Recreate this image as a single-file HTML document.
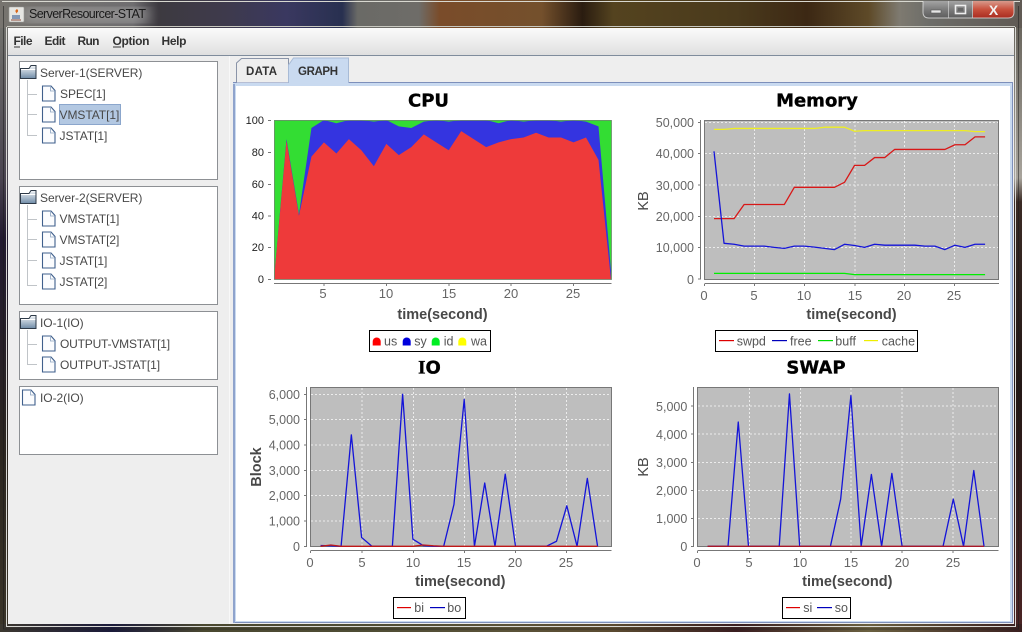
<!DOCTYPE html>
<html><head><meta charset="utf-8"><title>ServerResourcer-STAT</title>
<style>
html,body{margin:0;padding:0;background:#000;overflow:hidden}
svg{display:block}
text{font-family:"Liberation Sans",sans-serif}
.tree{font-size:12px;fill:#484848;letter-spacing:-.05px}
.menu{font-size:12px;font-weight:bold;fill:#333}
.tab{font-size:11.5px;font-weight:bold;fill:#333}
.title{font-family:"DejaVu Sans",sans-serif;font-size:18px;font-weight:bold;fill:#000;stroke:#000;stroke-width:.35;text-anchor:middle}
.axis{font-size:14.5px;font-weight:bold;fill:#484848;text-anchor:middle}
.tick{font-size:12.5px;fill:#666;text-anchor:end}
.xt{font-size:13px;fill:#666;text-anchor:middle}
.cput{font-size:11px;fill:#222;text-anchor:end}
.leg{font-size:12.5px;fill:#555}
.l{fill:none;stroke-width:1.3;vector-effect:non-scaling-stroke;stroke-linejoin:round}
.grid{stroke:#fff;stroke-opacity:.7;stroke-width:1;stroke-dasharray:2 2;fill:none}
.ax{stroke:#777;stroke-width:1;fill:none}
</style></head><body>
<svg width="1022" height="632" viewBox="0 0 1022 632" xmlns="http://www.w3.org/2000/svg">
<defs>
<linearGradient id="tb" x1="0" x2="1" y1="0" y2="0">
<stop offset="0" stop-color="#77746f"/><stop offset=".13" stop-color="#6f6e70"/><stop offset=".155" stop-color="#3d3a40"/><stop offset=".22" stop-color="#3e3a4c"/><stop offset=".28" stop-color="#3a3860"/><stop offset=".335" stop-color="#283050"/><stop offset=".35" stop-color="#6a6a66"/><stop offset=".41" stop-color="#6e6c68"/><stop offset=".43" stop-color="#7a4c2a"/><stop offset=".53" stop-color="#74502c"/><stop offset=".57" stop-color="#2a1c10"/><stop offset=".6" stop-color="#54431f"/><stop offset=".72" stop-color="#4a3a1c"/><stop offset=".79" stop-color="#3c2814"/><stop offset=".85" stop-color="#5e4a28"/><stop offset=".88" stop-color="#7e7a70"/><stop offset=".91" stop-color="#6c6c68"/><stop offset="1" stop-color="#605a54"/>
</linearGradient>
<linearGradient id="bb" x1="0" x2="1" y1="0" y2="0">
<stop offset="0" stop-color="#3c3830"/><stop offset=".11" stop-color="#1a1a3a"/><stop offset=".2" stop-color="#4a4830"/><stop offset=".35" stop-color="#4e4c34"/><stop offset=".5" stop-color="#5a5238"/><stop offset=".6" stop-color="#5a4a30"/><stop offset=".72" stop-color="#3a1e20"/><stop offset=".85" stop-color="#6a6040"/><stop offset="1" stop-color="#3a2020"/>
</linearGradient>
<linearGradient id="lb" x1="0" x2="0" y1="0" y2="1">
<stop offset="0" stop-color="#70706c"/><stop offset=".25" stop-color="#4a4450"/><stop offset=".35" stop-color="#221a30"/><stop offset=".7" stop-color="#2c2620"/><stop offset="1" stop-color="#3a3428"/>
</linearGradient>
<linearGradient id="rb" x1="0" x2="0" y1="0" y2="1">
<stop offset="0" stop-color="#6a665e"/><stop offset=".25" stop-color="#a8a49c"/><stop offset=".29" stop-color="#3a2a24"/><stop offset=".6" stop-color="#241816"/><stop offset="1" stop-color="#4a2424"/>
</linearGradient>
<linearGradient id="mn" x1="0" x2="0" y1="0" y2="1"><stop offset="0" stop-color="#fbfbfb"/><stop offset="1" stop-color="#dfdfdf"/></linearGradient>
<linearGradient id="btn" x1="0" x2="0" y1="0" y2="1"><stop offset="0" stop-color="#a4a4a4"/><stop offset=".5" stop-color="#7c7c7c"/><stop offset="1" stop-color="#5c5c5c"/></linearGradient>
<linearGradient id="cl" x1="0" x2="0" y1="0" y2="1"><stop offset="0" stop-color="#d89a8c"/><stop offset=".5" stop-color="#c8503c"/><stop offset="1" stop-color="#a82c20"/></linearGradient>
<linearGradient id="fd" x1="0" x2="0" y1="0" y2="1"><stop offset="0" stop-color="#f4f6f8"/><stop offset="1" stop-color="#6f8ca8"/></linearGradient>
<filter id="blur"><feGaussianBlur stdDeviation="6"/></filter>
<symbol id="doc" width="15" height="17" viewBox="0 0 15 17"><path d="M1 .5H9.500L13.500 5V15.500H1Z" fill="#fbfcfe" stroke="#3f5f8c" stroke-width="1.100"/><path d="M9 .5V5.500H13.500" fill="none" stroke="#8ea4c0" stroke-width=".8"/></symbol>
<symbol id="fold" width="17" height="14" viewBox="0 0 17 14"><path d="M.5 3.500H9L11 .5H16V13.500H.5Z" fill="url(#fd)" stroke="#2e3a48"/><path d="M1 4.500H15.500" stroke="#fff" stroke-width="1"/></symbol>
</defs>

<!-- window chrome -->
<rect width="1022" height="632" fill="#333"/>
<rect x="0" y="0" width="1022" height="28" fill="url(#tb)"/>
<rect x="0" y="28" width="8" height="600" fill="url(#lb)"/>
<rect x="1014" y="28" width="8" height="600" fill="url(#rb)"/>
<rect x="0" y="624" width="1022" height="8" fill="url(#bb)"/>
<rect x="24" y="8" width="124" height="14" fill="#b8b8b8" opacity=".55" filter="url(#blur)"/>
<path d="M2 1.500H1020" stroke="#d8d8d0" stroke-width="1"/>
<path d="M7 26.500H1015" stroke="#c8c8c0" stroke-width="1"/>
<path d="M6.500 27V626.500H1015.500V27" fill="none" stroke="#d8d8d4" stroke-width="1"/>
<path d="M3.500 6V629H1018.500V6" fill="none" stroke="#1a1a1a" stroke-opacity=".5" stroke-width="1"/>
<!-- title icon -->
<rect x="9" y="7" width="15" height="15" rx="1" fill="#e6e6e2" stroke="#9a9a96" stroke-width=".6"/>
<path d="M17 9c-3 2-1 3 0 5-1-2 3-2 0-5Z" fill="#d9661a"/>
<path d="M12 16h8M12 18h8" stroke="#4a6a9a" stroke-width="1.200"/>
<path d="M11 20h10" stroke="#8a4a3a" stroke-width="1"/>
<text x="29" y="18" font-size="12.500" fill="#1a1a1a" textLength="117" lengthAdjust="spacing">ServerResourcer-STAT</text>
<!-- window buttons -->
<path d="M923 1H948V18H929Q923 18 923 12Z" fill="url(#btn)"/>
<rect x="948" y="1" width="25" height="17" fill="url(#btn)"/>
<path d="M973 1H1014V12Q1014 18 1008 18H973Z" fill="url(#cl)"/>
<path d="M923 1V12Q923 18 929 18H1008Q1014 18 1014 12V1" fill="none" stroke="#e8e8e8" stroke-opacity=".75"/>
<path d="M948.500 1V18M972.500 1V18" stroke="#ddd" stroke-opacity=".6"/>
<rect x="931" y="10" width="10" height="3" fill="#e6e6e6" stroke="#555" stroke-width=".6"/>
<rect x="955.500" y="5.500" width="10" height="8" fill="none" stroke="#eee" stroke-width="1.600"/>
<rect x="958" y="8" width="5" height="3" fill="#666"/>
<text x="993.500" y="15" font-size="14" font-weight="bold" fill="#f2f2f2" text-anchor="middle">X</text>

<!-- client -->
<rect x="8" y="28" width="1006" height="596" fill="#eeeeee"/>
<rect x="8" y="28" width="1006" height="27" fill="url(#mn)"/>
<path d="M8 55.500H1014" stroke="#7f8c9c"/>
<text class="menu" x="13.500" y="45" textLength="19">File</text><path d="M14 47H20" stroke="#333"/>
<text class="menu" x="44.500" y="45" textLength="21">Edit</text>
<text class="menu" x="77.500" y="45" textLength="22">Run</text>
<text class="menu" x="112.500" y="45" textLength="37">Option</text><path d="M113 47H121" stroke="#333"/>
<text class="menu" x="161.500" y="45" textLength="25">Help</text>

<!-- tree boxes -->
<g fill="#fff" stroke="#8d9094">
<rect x="19.500" y="61.500" width="198" height="118"/>
<rect x="19.500" y="186.500" width="198" height="118"/>
<rect x="19.500" y="311.500" width="198" height="68"/>
<rect x="19.500" y="386.500" width="198" height="68"/>
</g>
<g fill="none" stroke="#c0c4c8">
<path d="M27.500 80V135.500H37M28 94.500H37M28 114.500H37"/>
<path d="M27.500 205V285.500H37M28 219.500H37M28 239.500H37M28 260.500H37"/>
<path d="M27.500 330V364.500H37M28 344.500H37"/>
</g>
<rect x="59.500" y="104.500" width="61" height="20" fill="#b3c8e2" stroke="#8ba6cc"/>
<use href="#fold" x="20" y="65"/><use href="#fold" x="20" y="190"/><use href="#fold" x="20" y="315"/>
<use href="#doc" x="41.500" y="85.500"/><use href="#doc" x="41.500" y="106.500"/><use href="#doc" x="41.500" y="127.500"/>
<use href="#doc" x="41.500" y="210.500"/><use href="#doc" x="41.500" y="231.500"/><use href="#doc" x="41.500" y="252.500"/><use href="#doc" x="41.500" y="273.500"/>
<use href="#doc" x="41.500" y="335.500"/><use href="#doc" x="41.500" y="356.500"/><use href="#doc" x="21.500" y="389.500"/>
<g class="tree">
<text x="40" y="77">Server-1(SERVER)</text>
<text x="60" y="98">SPEC[1]</text><text x="59.500" y="119">VMSTAT[1]</text><text x="59.500" y="140">JSTAT[1]</text>
<text x="40" y="202">Server-2(SERVER)</text>
<text x="59.500" y="223">VMSTAT[1]</text><text x="59.500" y="244">VMSTAT[2]</text><text x="59.500" y="265">JSTAT[1]</text><text x="59.500" y="286">JSTAT[2]</text>
<text x="40" y="327">IO-1(IO)</text>
<text x="60" y="348" textLength="110">OUTPUT-VMSTAT[1]</text><text x="60" y="369" textLength="100">OUTPUT-JSTAT[1]</text>
<text x="40" y="402">IO-2(IO)</text>
</g>

<!-- splitter edge -->
<rect x="229" y="56" width="1" height="568" fill="#f8f8f8"/>

<!-- content panel -->
<rect x="233" y="82" width="780" height="541" fill="#7d8fba"/>
<rect x="233" y="83" width="779" height="539" fill="#c9daf0"/>
<rect x="233" y="84" width="2" height="539" fill="#8fa3cc"/>
<rect x="236" y="86" width="774" height="535" fill="#fff"/>

<!-- tabs -->
<path d="M236.500 82.500V63L241.500 58.500H288.500V82.500" fill="#eeeeee" stroke="#8a94a8"/>
<path d="M288.500 84V65L293.500 58H348.500V84Z" fill="#c9daf0"/>
<path d="M288.500 82V65L293.500 58H348.500V82" fill="none" stroke="#a8bbd6"/>
<text class="tab" x="246" y="75" textLength="31">DATA</text>
<text class="tab" x="298" y="75" textLength="40">GRAPH</text>

<!-- CPU -->
<text class="title" x="428.500" y="106.500">CPU</text>
<rect x="274" y="120" width="337.500" height="159.500" fill="#33dd33"/>
<g transform="translate(261.520,279.500) scale(12.480,-1.595)">
<polygon fill="#3434e0" points="1,0 2,88 3,41 4,95 5,100 6,98 7,100 8,100 9,99 10,100 11,96 12,95 13,99 14,100 15,99 16,100 17,100 18,100 19,98 20,100 21,99 22,100 23,100 24,99 25,100 26,99 27,96 28,6 28,0"/>
<polygon fill="#ee3a3a" points="1,0 2,87 3,40 4,77 5,86 6,79 7,88 8,81 9,71 10,85 11,78 12,83 13,91 14,86 15,81 16,93 17,88 18,83 19,86 20,88 21,89 22,92 23,89 24,89 25,86 26,89 27,75 28,0"/>
</g>
<rect x="274.500" y="120.500" width="337" height="159" fill="none" stroke="#6e8a6e" stroke-width=".8"/>
<path class="ax" d="M274 283.500H611.500M324 284V286M386.500 284V286M449 284V286M511 284V286M573.500 284V286M268 120.500H271M268 152.500H271M268 184.500H271M268 216H271M268 247.500H271M268 279.500H271"/>
<g class="cput"><text x="264" y="124">100</text><text x="264" y="156">80</text><text x="264" y="188">60</text><text x="264" y="219.500">40</text><text x="264" y="251">20</text><text x="264" y="283">0</text></g>
<g class="xt"><text x="323" y="298">5</text><text x="386" y="298">10</text><text x="449" y="298">15</text><text x="511" y="298">20</text><text x="573" y="298">25</text></g>
<text class="axis" x="442.500" y="319">time(second)</text>
<rect x="369.500" y="330.500" width="121" height="21" fill="#fff" stroke="#000"/>
<path d="M372.700 345.500V341.500A4 4 0 0 1 380.700 341.500V345.500Z" fill="#f00"/>
<path d="M402.700 345.500V341.500A4 4 0 0 1 410.700 341.500V345.500Z" fill="#00d"/>
<path d="M431.700 345.500V341.500A4 4 0 0 1 439.700 341.500V345.500Z" fill="#0e2"/>
<path d="M458.300 345.500V341.500A4 4 0 0 1 466.300 341.500V345.500Z" fill="#ff0"/>
<g class="leg"><text x="384" y="345.500">us</text><text x="414.300" y="345.500">sy</text><text x="443.700" y="345.500">id</text><text x="471" y="345.500">wa</text></g>

<!-- Memory -->
<text class="title" x="817" y="106.500">Memory</text>
<rect x="704.500" y="120.500" width="294" height="159" fill="#bebebe" stroke="#777"/>
<path class="grid" d="M754.500 121V279M804.500 121V279M855 121V279M904.500 121V279M954.500 121V279M705 122.500H998M705 153.500H998M705 185H998M705 216.500H998M705 247.500H998"/>
<g transform="translate(703.960,278.700) scale(10.040,-0.00313)">
<polyline class="l" stroke="#00ee00" points="1,1700 14,1700 15,1300 28,1300"/>
<polyline class="l" stroke="#eeee22" points="1,47700 2,47700 3,48000 11,48000 12,48400 14,48400 15,47100 16,47300 26,47300 27,47000 28,47000"/>
<polyline class="l" stroke="#d81818" points="1,19200 3,19200 4,23700 8,23700 9,29200 13,29200 14,30800 15,36200 16,36200 17,38700 18,38700 19,41300 24,41300 25,42800 26,42800 27,45300 28,45300"/>
<polyline class="l" stroke="#1414d8" points="1,40700 2,11300 3,11000 4,10400 5,10400 6,10400 7,10000 8,9700 9,10400 10,10400 11,10100 12,9700 13,9300 14,11000 15,10600 16,10000 17,11000 18,10700 19,10700 20,10700 21,10700 22,10400 23,10400 24,9300 25,10700 26,10000 27,11000 28,11000"/>
</g>
<path class="ax" d="M700.500 120V279M698 122.500H701M698 153.500H701M698 185H701M698 216.500H701M698 247.500H701M698 279H701M704.500 283.500H999M704.500 284V286M754.500 284V286M804.500 284V286M855 284V286M904.500 284V286M954.500 284V286"/>
<g class="tick"><text x="694" y="127">50,000</text><text x="694" y="158">40,000</text><text x="694" y="190">30,000</text><text x="694" y="221">20,000</text><text x="694" y="252">10,000</text><text x="694" y="284">0</text></g>
<g class="xt"><text x="704" y="300">0</text><text x="754" y="300">5</text><text x="804" y="300">10</text><text x="855" y="300">15</text><text x="904" y="300">20</text><text x="954" y="300">25</text></g>
<text class="axis" x="851.500" y="319">time(second)</text>
<text class="axis" style="font-weight:normal" transform="translate(648,201) rotate(-90)">KB</text>
<rect x="715.500" y="330.500" width="202" height="21" fill="#fff" stroke="#000"/>
<rect x="719" y="340" width="15" height="1.200" fill="#d00"/><rect x="772" y="340" width="15" height="1.200" fill="#00b"/><rect x="818" y="340" width="15" height="1.200" fill="#0d0"/><rect x="864" y="340" width="14" height="1.200" fill="#ee0"/>
<g class="leg"><text x="736.700" y="345.500">swpd</text><text x="790" y="345.500">free</text><text x="835.300" y="345.500">buff</text><text x="881.700" y="345.500">cache</text></g>

<!-- IO -->
<text class="title" x="429.500" y="373.500"><tspan style="font-family:'Liberation Serif',serif;font-size:19px">I</tspan>O</text>
<rect x="310.500" y="387.500" width="301" height="159" fill="#bebebe" stroke="#777"/>
<path class="grid" d="M362 388V546M413.500 388V546M464.500 388V546M515.500 388V546M566.500 388V546M311 394.500H611M311 419.500H611M311 445H611M311 470.500H611M311 495.500H611M311 521H611"/>
<g transform="translate(310.300,546.300) scale(10.260,-0.02533)">
<polyline class="l" stroke="#1414d8" points="1,30 2,20 3,0 4,4400 5,350 6,0 7,0 8,0 9,6000 10,280 11,30 12,0 13,0 14,1650 15,5800 16,0 17,2500 18,0 19,2850 20,0 21,0 22,0 23,0 24,200 25,1600 26,0 27,2680 28,0"/>
<polyline class="l" stroke="#c01818" points="1,0 2,50 3,0 10,0 11,50 12,20 13,0 28,0"/>
</g>
<path class="ax" d="M306.500 387V546M304 394.500H307M304 419.500H307M304 445H307M304 470.500H307M304 495.500H307M304 521H307M304 546.500H307M310.500 550.500H611.500M310.500 551V553M362 551V553M413.500 551V553M464.500 551V553M515.500 551V553M566.500 551V553"/>
<g class="tick"><text x="300" y="399">6,000</text><text x="300" y="424">5,000</text><text x="300" y="449.500">4,000</text><text x="300" y="475">3,000</text><text x="300" y="500">2,000</text><text x="300" y="525.500">1,000</text><text x="300" y="551">0</text></g>
<g class="xt"><text x="310" y="567">0</text><text x="362" y="567">5</text><text x="413" y="567">10</text><text x="464" y="567">15</text><text x="515" y="567">20</text><text x="566" y="567">25</text></g>
<text class="axis" x="460.300" y="586">time(second)</text>
<text class="axis" transform="translate(261,467) rotate(-90)">Block</text>
<rect x="393.500" y="597.500" width="72" height="21" fill="#fff" stroke="#000"/>
<rect x="397" y="607" width="14" height="1.200" fill="#d00"/><rect x="430" y="607" width="15" height="1.200" fill="#00b"/>
<g class="leg"><text x="414.300" y="612">bi</text><text x="447.300" y="612">bo</text></g>

<!-- SWAP -->
<text class="title" x="816" y="373.500">SWAP</text>
<rect x="697.500" y="387.500" width="301" height="159" fill="#bebebe" stroke="#777"/>
<path class="grid" d="M749.500 388V546M800.500 388V546M851 388V546M902 388V546M953 388V546M698 406H998M698 434H998M698 462.500H998M698 490.500H998M698 518.500H998"/>
<g transform="translate(697.300,546.300) scale(10.240,-0.02806)">
<polyline class="l" stroke="#1414d8" points="1,0 3,0 4,4430 5,0 8,0 9,5430 10,0 13,0 14,1680 15,5370 16,0 17,2560 18,0 19,2600 20,0 24,0 25,1680 26,0 27,2700 28,0"/>
<polyline class="l" stroke="#a81828" points="1,0 28,0"/>
</g>
<path class="ax" d="M693.500 387V546M691 406H694M691 434H694M691 462.500H694M691 490.500H694M691 518.500H694M691 546.500H694M697.500 550.500H998.500M697.500 551V553M749.500 551V553M800.500 551V553M851 551V553M902 551V553M953 551V553"/>
<g class="tick"><text x="687.300" y="411">5,000</text><text x="687.300" y="439">4,000</text><text x="687.300" y="467">3,000</text><text x="687.300" y="495">2,000</text><text x="687.300" y="523">1,000</text><text x="687.300" y="551">0</text></g>
<g class="xt"><text x="697" y="567">0</text><text x="749" y="567">5</text><text x="800" y="567">10</text><text x="851" y="567">15</text><text x="902" y="567">20</text><text x="953" y="567">25</text></g>
<text class="axis" x="847.300" y="586">time(second)</text>
<text class="axis" style="font-weight:normal" transform="translate(648,467) rotate(-90)">KB</text>
<rect x="782.500" y="597.500" width="68" height="21" fill="#fff" stroke="#000"/>
<rect x="786" y="607" width="14" height="1.200" fill="#d00"/><rect x="817" y="607" width="15" height="1.200" fill="#00b"/>
<g class="leg"><text x="803.300" y="612">si</text><text x="834.700" y="612">so</text></g>
</svg>
</body></html>
